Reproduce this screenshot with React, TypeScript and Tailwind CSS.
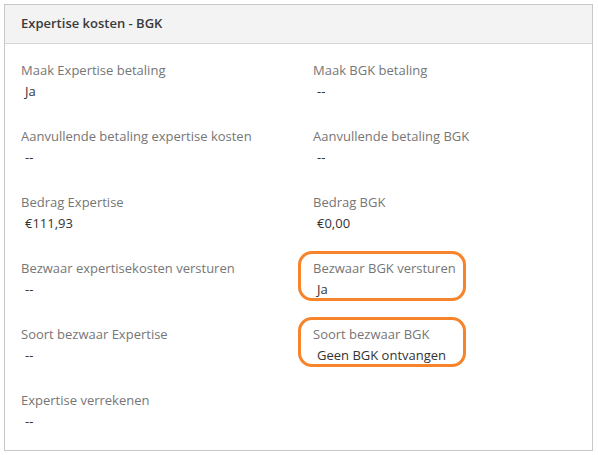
import React from "react";

type Cell = { label: string; value: string; box?: boolean };

const rows: [Cell, Cell | null][] = [
  [{ label: "Maak Expertise betaling", value: "Ja" }, { label: "Maak BGK betaling", value: "--" }],
  [
    { label: "Aanvullende betaling expertise kosten", value: "--" },
    { label: "Aanvullende betaling BGK", value: "--" },
  ],
  [{ label: "Bedrag Expertise", value: "€111,93" }, { label: "Bedrag BGK", value: "€0,00" }],
  [
    { label: "Bezwaar expertisekosten versturen", value: "--" },
    { label: "Bezwaar BGK versturen", value: "Ja", box: true },
  ],
  [
    { label: "Soort bezwaar Expertise", value: "--" },
    { label: "Soort bezwaar BGK", value: "Geen BGK ontvangen", box: true },
  ],
  [{ label: "Expertise verrekenen", value: "--" }, null],
];

function Field({ cell }: { cell: Cell }) {
  return (
    <div className="relative">
      {cell.box && (
        <div className="absolute -left-[15px] -top-[7px] w-[168px] h-[50px] rounded-[14px] border-[3px] border-[#f7832a]" />
      )}
      <div className="text-[13px] leading-[20px] text-[#767676] whitespace-nowrap">{cell.label}</div>
      <div className="text-[13px] leading-[22px] text-[#333333] pl-[4px] whitespace-nowrap">{cell.value}</div>
    </div>
  );
}

export default function App() {
  return (
    <div className="w-[598px] h-[455px] bg-white p-[4px]" style={{ fontFamily: '"Open Sans", "Noto Sans", sans-serif' }}>
      <div className="w-[589px] border border-[#c8c8c8]">
        <div className="h-[39px] bg-[#f3f3f3] border-b border-[#d6d6d6] flex items-center px-[16px]">
          <span className="text-[13px] font-semibold text-[#3a3a3a]">Expertise kosten - BGK</span>
        </div>
        <div className="pt-[16px] pb-[18px] px-[16px] flex flex-col gap-[24px]">
          {rows.map((r, i) => (
            <div key={i} className="grid grid-cols-[292px_1fr]">
              <Field cell={r[0]} />
              {r[1] ? <Field cell={r[1]} /> : <div />}
            </div>
          ))}
        </div>
      </div>
    </div>
  );
}
